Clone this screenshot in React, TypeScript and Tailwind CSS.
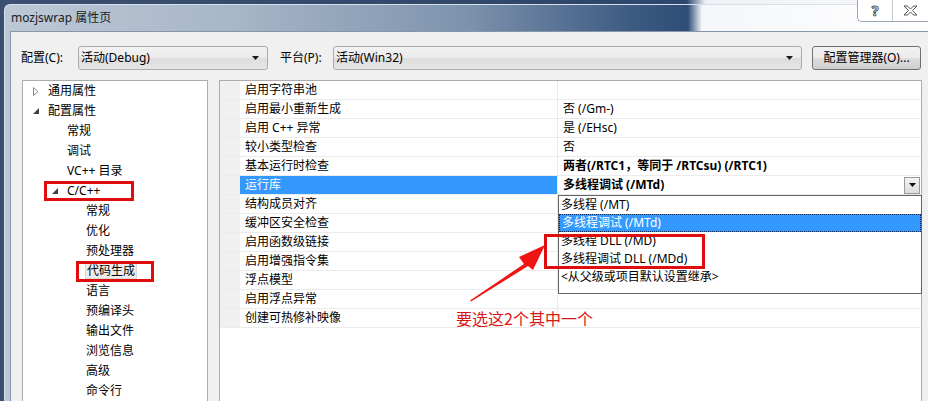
import React from 'react';

// ─── Dados ────────────────────────────────────────────────────────────────

const arvore: { t: string; nivel: number; seta?: 'aberta' | 'fechada'; sel?: boolean }[] = [
  { t: '通用属性', nivel: 0, seta: 'fechada' },
  { t: '配置属性', nivel: 0, seta: 'aberta' },
  { t: '常规', nivel: 1 },
  { t: '调试', nivel: 1 },
  { t: 'VC++ 目录', nivel: 1 },
  { t: 'C/C++', nivel: 1, seta: 'aberta' },
  { t: '常规', nivel: 2 },
  { t: '优化', nivel: 2 },
  { t: '预处理器', nivel: 2 },
  { t: '代码生成', nivel: 2, sel: true },
  { t: '语言', nivel: 2 },
  { t: '预编译头', nivel: 2 },
  { t: '输出文件', nivel: 2 },
  { t: '浏览信息', nivel: 2 },
  { t: '高级', nivel: 2 },
  { t: '命令行', nivel: 2 },
];

const propriedades: { nome: string; valor?: string; negrito?: boolean; ativo?: boolean }[] = [
  { nome: '启用字符串池' },
  { nome: '启用最小重新生成', valor: '否 (/Gm-)' },
  { nome: '启用 C++ 异常', valor: '是 (/EHsc)' },
  { nome: '较小类型检查', valor: '否' },
  { nome: '基本运行时检查', valor: '两者(/RTC1，等同于 /RTCsu) (/RTC1)', negrito: true },
  { nome: '运行库', valor: '多线程调试 (/MTd)', negrito: true, ativo: true },
  { nome: '结构成员对齐' },
  { nome: '缓冲区安全检查' },
  { nome: '启用函数级链接' },
  { nome: '启用增强指令集' },
  { nome: '浮点模型' },
  { nome: '启用浮点异常' },
  { nome: '创建可热修补映像' },
];

const opcoes = ['多线程 (/MT)', '多线程调试 (/MTd)', '多线程 DLL (/MD)', '多线程调试 DLL (/MDd)', '<从父级或项目默认设置继承>'];

// ─── Pequenos pedaços ─────────────────────────────────────────────────────

function Seta({ tipo }: { tipo: 'aberta' | 'fechada' }) {
  return tipo === 'fechada' ? (
    <svg width="6" height="9" viewBox="0 0 6 9" className="block">
      <path d="M0.5 0.5 L5 4.5 L0.5 8.5 Z" fill="none" stroke="#8a8a8a" strokeWidth="1" />
    </svg>
  ) : (
    <svg width="6" height="6" viewBox="0 0 6 6" className="block">
      <path d="M6 0 L6 6 L0 6 Z" fill="#404040" />
    </svg>
  );
}

function Combo({ texto, largura }: { texto: string; largura: string }) {
  return (
    <div
      className={`${largura} flex h-6 items-center justify-between rounded-[3px] border border-[#acacac] bg-[linear-gradient(180deg,#f2f2f2_0%,#ebebeb_50%,#dddddd_51%,#e5e5e5_100%)] pl-[2px] pr-[8px]`}
    >
      <span>{texto}</span>
      <svg width="7" height="4" viewBox="0 0 7 4">
        <path d="M0 0 L7 0 L3.5 4 Z" fill="#1a1a1a" />
      </svg>
    </div>
  );
}

// ─── Componente ───────────────────────────────────────────────────────────

export default function App() {
  return (
    <div className="relative flex h-[401px] w-[928px] flex-col overflow-hidden bg-[linear-gradient(90deg,#3b5070_0%,#30466a_60%,#2d4870_74%,#eef1f5_76%,#f7f8fa_100%)] font-['Noto_Sans','Noto_Sans_CJK_SC',sans-serif] text-[12px] text-black">
      <div className="h-1 shrink-0" />

      {/* janela */}
      <div className="ml-1 flex flex-1 flex-col rounded-tl-[6px] border-l border-t border-[#d8e0ea] bg-[linear-gradient(90deg,#bcc8d6_0%,#a7b6c8_25%,#7d93ad_50%,#3d5a82_68%,#2f4d76_74%,#f4f6f9_75.5%,#ffffff_100%)]">
        <div className="flex h-[26px] shrink-0 items-center pl-[6px] text-[12px] text-[#1c1c1c]">mozjswrap 属性页</div>

        {/* área cliente */}
        <div className="ml-[5px] flex flex-1 flex-col border-l border-t border-[#8596ab] bg-[#f0f0f0] pl-[10px] pt-[14px]">
          <div className="flex h-6 items-center">
            <span className="w-[57px]">配置(C):</span>
            <Combo texto="活动(Debug)" largura="w-[190px]" />
            <span className="ml-[12px] w-[53px]">平台(P):</span>
            <Combo texto="活动(Win32)" largura="w-[469px]" />
            <button
              type="button"
              className="ml-[10px] h-6 w-[109px] rounded-[3px] border border-[#707070] bg-[linear-gradient(180deg,#f2f2f2_0%,#ebebeb_50%,#dddddd_51%,#cfcfcf_100%)]"
            >
              配置管理器(O)...
            </button>
          </div>

          <div className="mt-[10px] flex flex-1 gap-[11px] pl-[1px]">
            {/* árvore */}
            <div className="w-[186px] border border-b-0 border-[#acacac] bg-white">
              {arvore.map((n, i) => (
                <div key={i} className="flex h-5 items-center" style={{ paddingLeft: 10 + n.nivel * 19 }}>
                  <span className="flex w-[15px] items-center">{n.seta && <Seta tipo={n.seta} />}</span>
                  {n.sel ? (
                    <span className="-ml-[1px] border border-[#dadada] bg-[#ececec] px-[1px] leading-[14px]">{n.t}</span>
                  ) : (
                    <span>{n.t}</span>
                  )}
                </div>
              ))}
            </div>

            {/* grade de propriedades */}
            <div className="w-[703px] border border-b-0 border-[#acacac] bg-white">
              {propriedades.map((p, i) => (
                <div key={i} className="flex h-[19px] border-b border-[#ebebeb]">
                  <div className="w-5 bg-[#f0f0f0]" />
                  <div
                    className={`flex w-[318px] items-center border-r border-[#ebebeb] pl-[5px] ${p.ativo ? 'bg-[#3399ff] text-white' : ''}`}
                  >
                    {p.nome}
                  </div>
                  <div className={`flex flex-1 items-center justify-between pl-[5px] ${p.negrito ? 'font-bold' : ''}`}>
                    <span>{p.valor}</span>
                    {p.ativo && (
                      <span className="mr-[1px] flex h-[17px] w-4 items-center justify-center border border-[#9a9a9a] bg-[linear-gradient(180deg,#f4f4f4,#dcdcdc)]">
                        <svg width="7" height="4" viewBox="0 0 7 4">
                          <path d="M0 0 L7 0 L3.5 4 Z" fill="#111" />
                        </svg>
                      </span>
                    )}
                  </div>
                </div>
              ))}
            </div>
          </div>
        </div>
      </div>

      {/* botões ? e X */}
      <div className="absolute right-0 top-0 flex h-[22px] w-[71px] rounded-bl-[5px] border-b border-l border-[#9ba6b3] bg-white">
        <div className="flex w-[35px] items-center justify-center border-r border-[#c4cad2] text-[14px] font-bold text-white [-webkit-text-stroke:1px_#555]">
          ?
        </div>
        <div className="flex flex-1 items-center justify-center">
          <svg width="15" height="11" viewBox="0 0 15 11">
            <path
              d="M1 1 H4.5 L7.5 4 L10.5 1 H14 L9.5 5.5 L14 10 H10.5 L7.5 7 L4.5 10 H1 L5.5 5.5 Z"
              fill="white"
              stroke="#555"
              strokeWidth="1"
            />
          </svg>
        </div>
      </div>

      {/* lista suspensa aberta */}
      <div className="absolute left-[558px] top-[195px] h-[99px] w-[364px] border border-[#646464] bg-white">
        {opcoes.map((o, i) => (
          <div
            key={i}
            className={`flex h-[18px] items-center pl-[2px] ${i === 1 ? 'border border-dotted border-[#0b2b5a] bg-[#3399ff] text-white' : ''}`}
          >
            {o}
          </div>
        ))}
      </div>

      {/* anotações em vermelho */}
      <div className="absolute left-[44px] top-[181px] h-[20px] w-[90px] border-[3px] border-[#e00d0d]" />
      <div className="absolute left-[76px] top-[261px] h-[21px] w-[78px] border-[3px] border-[#e00d0d]" />
      <div className="absolute left-[544px] top-[234px] h-[35px] w-[161px] border-[3px] border-[#e00d0d]" />

      <svg className="pointer-events-none absolute left-0 top-0" width="928" height="401">
        <path d="M470 300.5 L524 264 L519 257 L545 245 L533 270 L528 266 L471 301.5 Z" fill="#f01414" />
      </svg>

      <div className="absolute left-[456px] top-[308px] font-['Noto_Sans_CJK_SC',sans-serif] text-[16px] leading-[20px] text-[#d81818]">
        要选这2个其中一个
      </div>
    </div>
  );
}
